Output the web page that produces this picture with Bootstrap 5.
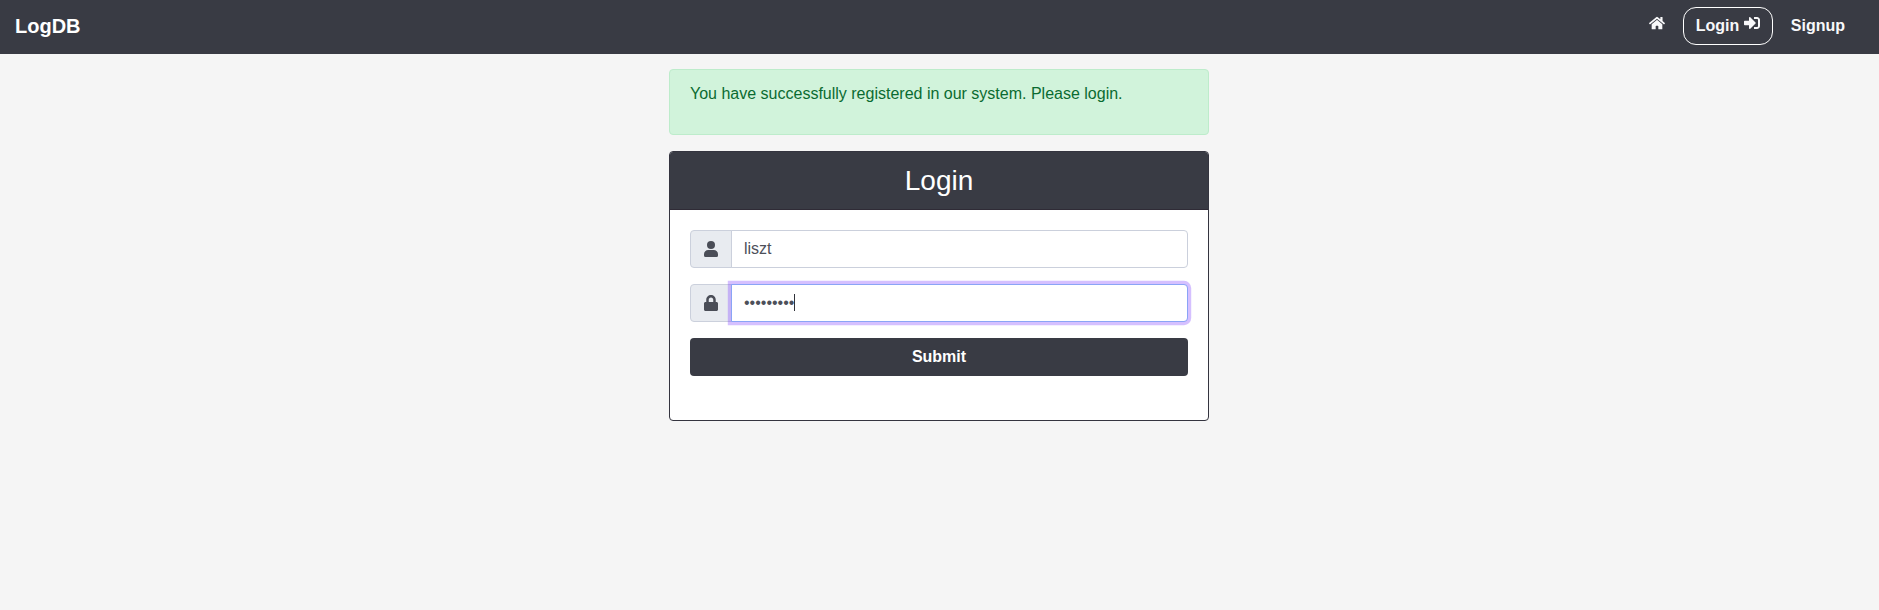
<!DOCTYPE html>
<html lang="en">
<head>
<meta charset="utf-8">
<meta name="viewport" content="width=device-width, initial-scale=1">
<title>LogDB</title>
<link href="https://cdn.jsdelivr.net/npm/bootstrap@5.3.0/dist/css/bootstrap.min.css" rel="stylesheet">
<style>
  body { font-family: "Liberation Sans", Arial, sans-serif; background: #f5f5f5; }
  svg { fill: currentColor; display: inline-block; }
  .bg-slate { background: #393b44; color: #fff; }
  .top-bar { height: 54px; padding: 7px 21px 0 15px; }
  .brand-name { font-size: 20px; line-height: 30px; padding-top: 4px; color: #fff; text-decoration: none; }
  .top-links { gap: 5px; }
  .top-link { color: #f8f8fa; font-weight: 700; padding: 5px 12px; border: 1px solid transparent; border-radius: 13px; line-height: 26px; height: 38px; text-decoration: none; white-space: nowrap; }
  .top-link.current { border-color: #fff; }
  .icon-home { vertical-align: 1px; }
  .icon-enter { vertical-align: 0; }
  .page { padding-right: 1px; }
  .panel { width: 540px; }
  .notice { height: 66px; margin-top: 15px; padding: 12px 20px; border: 1px solid #bdeccb; border-radius: 4px; background: #d1f3db; color: #0a6b31; }
  .login-card { height: 270px; border: 1px solid #34343f; border-radius: 4px; }
  .login-card .card-header { height: 58px; padding: 12px 20px; border-bottom: 1px solid #2f2b36; border-radius: 3px 3px 0 0; }
  .login-card h3 { font-size: 28px; line-height: 34px; font-weight: 400; margin: 0; }
  .login-card .card-body { padding: 20px; }
  .input-group-text { background: #e8ebf0; border-color: #cbd0dc; border-radius: 4px; color: #4a4d57; width: 42px; padding: 0 13px; }
  .form-control { height: 38px; border-color: #cbd0dc; border-radius: 4px; color: #4d505a; }
  .form-control:focus { color: #4d505a; border-color: #8aa4f6; box-shadow: 0 0 0 3.2px rgba(127, 63, 255, .33); }
  #pw { caret-color: transparent; border-top-right-radius: 4px; border-bottom-right-radius: 4px; }
  .caret { width: 1px; height: 17px; background: #30323a; left: 105px; top: 10px; z-index: 6; }
  .submit-btn { height: 38px; border-radius: 4px; font-weight: 700; }
  .submit-btn:hover { background: #393b44; color: #fff; }
</style>
</head>
<body>
<nav class="bg-slate top-bar d-flex align-items-start">
  <a class="brand-name fw-bold me-auto" href="#">LogDB</a>
  <div class="top-links d-flex">
    <a class="top-link" href="#" aria-label="Home"><svg class="icon-home" width="16" height="14.22" viewBox="0 0 576 512"><path d="M280.37 148.26L96 300.11V464a16 16 0 0 0 16 16l112.06-.29a16 16 0 0 0 15.92-16V368a16 16 0 0 1 16-16h64a16 16 0 0 1 16 16v95.64a16 16 0 0 0 16 16.05L464 480a16 16 0 0 0 16-16V300L295.67 148.26a12.19 12.19 0 0 0-15.3 0zM571.6 251.47L488 182.56V44.05a12 12 0 0 0-12-12h-56a12 12 0 0 0-12 12v72.61L318.47 43a48 48 0 0 0-61 0L4.34 251.47a12 12 0 0 0-1.6 16.9l25.5 31A12 12 0 0 0 45.15 301l235.22-193.74a12.19 12.19 0 0 1 15.3 0L530.9 301a12 12 0 0 0 16.9-1.6l25.5-31a12 12 0 0 0-1.7-16.93z"/></svg></a>
    <a class="top-link current" href="#">Login <svg class="icon-enter" width="16" height="16" viewBox="0 0 512 512"><path d="M416 448h-84c-6.6 0-12-5.4-12-12v-40c0-6.6 5.4-12 12-12h84c17.7 0 32-14.3 32-32V160c0-17.7-14.3-32-32-32h-84c-6.6 0-12-5.4-12-12V76c0-6.6 5.4-12 12-12h84c53 0 96 43 96 96v192c0 53-43 96-96 96zm-47-209L201 71c-15-15-41-4.5-41 17v96H24c-13.3 0-24 10.7-24 24v96c0 13.3 10.7 24 24 24h136v96c0 21.5 26 32 41 17l168-168c9.3-9.4 9.3-24.6 0-34z"/></svg></a>
    <a class="top-link" href="#">Signup</a>
  </div>
</nav>
<div class="page">
<main class="panel mx-auto">
  <div class="notice mb-3">You have successfully registered in our system. Please login.</div>
  <div class="card login-card">
    <div class="card-header bg-slate text-center"><h3>Login</h3></div>
    <form class="card-body">
      <div class="input-group mb-3">
        <span class="input-group-text"><svg width="14" height="16" viewBox="0 0 14 16"><circle cx="7" cy="4" r="4"/><path d="M4.2 9h5.6A4.2 4.2 0 0 1 14 13.2v1.3a1.5 1.5 0 0 1-1.5 1.5h-11A1.5 1.5 0 0 1 0 14.5v-1.3A4.2 4.2 0 0 1 4.2 9z"/></svg></span>
        <input class="form-control" type="text" value="liszt" aria-label="Username">
      </div>
      <div class="input-group mb-3">
        <span class="input-group-text"><svg width="14" height="16" viewBox="0 0 448 512"><path d="M400 224h-24v-72C376 68.2 307.8 0 224 0S72 68.2 72 152v72H48c-26.5 0-48 21.5-48 48v192c0 26.5 21.5 48 48 48h352c26.5 0 48-21.5 48-48V272c0-26.5-21.5-48-48-48zm-104 0H152v-72c0-39.7 32.3-72 72-72s72 32.3 72 72v72z"/></svg></span>
        <input class="form-control" id="pw" type="password" value="lisztlisz" aria-label="Password" autofocus>
        <span class="caret position-absolute"></span>
      </div>
      <button type="button" class="btn bg-slate submit-btn w-100">Submit</button>
    </form>
  </div>
</main>
</div>
<script src="https://cdn.jsdelivr.net/npm/bootstrap@5.3.0/dist/js/bootstrap.bundle.min.js"></script>
<script>document.getElementById('pw').focus();</script>
</body>
</html>
